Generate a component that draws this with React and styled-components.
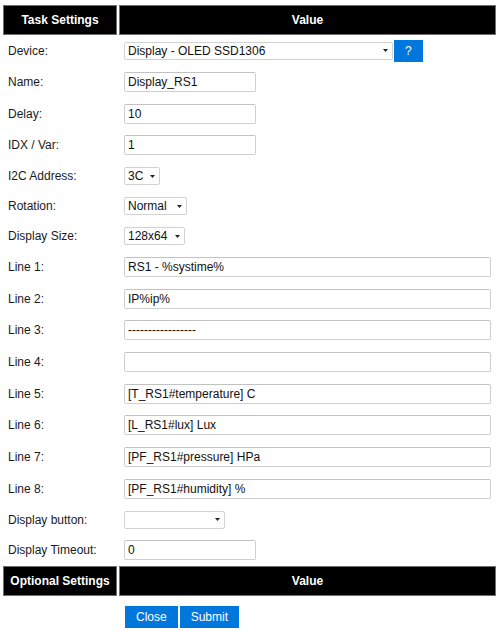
import React from 'react';
import styled, { createGlobalStyle } from 'styled-components';

const GlobalStyle = createGlobalStyle`
  html, body {
    margin: 0;
    padding: 0;
    background: #fff;
  }
  * {
    box-sizing: border-box;
  }
`;

const Page = styled.div`
  padding: 5px 4px 0 3px;
  font-family: "Liberation Sans", Arial, sans-serif;
  font-size: 12px;
  color: #111;
`;

const Row = styled.div`
  display: grid;
  grid-template-columns: 114px 377px;
  column-gap: 2px;
  height: ${props => props.h}px;
  align-items: center;
`;

const HeadCell = styled.div`
  height: 30px;
  background: #000;
  border: 1px solid #6f6f6f;
  color: #fff;
  font-weight: bold;
  display: flex;
  align-items: center;
  justify-content: center;
  white-space: nowrap;
`;

const Label = styled.div`
  padding-left: 5px;
  color: #1a1a1a;
  white-space: nowrap;
`;

const Value = styled.div`
  display: flex;
  align-items: center;
  padding-left: ${props => props.pad || 5}px;
  gap: ${props => props.gap || 0}px;
`;

const TextInput = styled.input`
  display: block;
  width: ${props => props.w}px;
  height: 20px;
  margin: 0;
  padding: 0 3px;
  border: 1px solid #cfcfcf;
  border-top-color: #c2c2c2;
  border-radius: 2px;
  background: #fff;
  font-family: inherit;
  font-size: 12px;
  color: #111;
  outline: none;
`;

const SelectBox = styled.div`
  display: flex;
  align-items: center;
  justify-content: space-between;
  width: ${props => props.w}px;
  height: 18px;
  padding: 0 4px 0 3px;
  border: 1px solid #d2d2d2;
  border-radius: 2px;
  background: #fff;
  color: #111;
  white-space: nowrap;
`;

const Caret = styled.svg`
  flex: none;
  width: 5px;
  height: 3px;
`;

const Button = styled.button`
  height: 22px;
  margin: 0;
  padding: 0 11px;
  border: none;
  border-radius: 0;
  background: #0077dd;
  color: #fff;
  font-family: inherit;
  font-size: 12px;
  line-height: 22px;
  cursor: pointer;
`;

const Select = ({ w, children }) => (
  <SelectBox w={w}>
    <span>{children}</span>
    <Caret viewBox="0 0 5 3">
      <path d="M0 0H5L2.5 3Z" fill="#222" />
    </Caret>
  </SelectBox>
);

const Header = ({ left }) => (
  <Row h={30}>
    <HeadCell>{left}</HeadCell>
    <HeadCell>Value</HeadCell>
  </Row>
);

const lines = [
  'RS1 - %systime%',
  'IP%ip%',
  '-----------------',
  '',
  '[T_RS1#temperature] C',
  '[L_RS1#lux] Lux',
  '[PF_RS1#pressure] HPa',
  '[PF_RS1#humidity] %',
];

const INPUT_ROW = 31.7;

export default function App() {
  return (
    <Page>
      <GlobalStyle />
      <Header left="Task Settings" />

      <Row h={31}>
        <Label>Device:</Label>
        <Value gap={1}>
          <Select w={269}>Display - OLED SSD1306</Select>
          <Button>?</Button>
        </Value>
      </Row>

      <Row h={INPUT_ROW}>
        <Label>Name:</Label>
        <Value><TextInput w={132} defaultValue="Display_RS1" /></Value>
      </Row>
      <Row h={INPUT_ROW}>
        <Label>Delay:</Label>
        <Value><TextInput w={132} defaultValue="10" /></Value>
      </Row>
      <Row h={INPUT_ROW}>
        <Label>IDX / Var:</Label>
        <Value><TextInput w={132} defaultValue="1" /></Value>
      </Row>

      <Row h={30}>
        <Label>I2C Address:</Label>
        <Value><Select w={36}>3C</Select></Value>
      </Row>
      <Row h={30}>
        <Label>Rotation:</Label>
        <Value><Select w={63}>Normal</Select></Value>
      </Row>
      <Row h={30}>
        <Label>Display Size:</Label>
        <Value><Select w={61}>128x64</Select></Value>
      </Row>

      {lines.map((text, i) => (
        <Row h={INPUT_ROW} key={i}>
          <Label>Line {i + 1}:</Label>
          <Value><TextInput w={367} defaultValue={text} /></Value>
        </Row>
      ))}

      <Row h={30}>
        <Label>Display button:</Label>
        <Value><Select w={101}>{''}</Select></Value>
      </Row>
      <Row h={INPUT_ROW}>
        <Label>Display Timeout:</Label>
        <Value><TextInput w={132} defaultValue="0" /></Value>
      </Row>

      <Header left="Optional Settings" />

      <Row h={42}>
        <div />
        <Value pad={6} gap={2}>
          <Button>Close</Button>
          <Button>Submit</Button>
        </Value>
      </Row>
    </Page>
  );
}
